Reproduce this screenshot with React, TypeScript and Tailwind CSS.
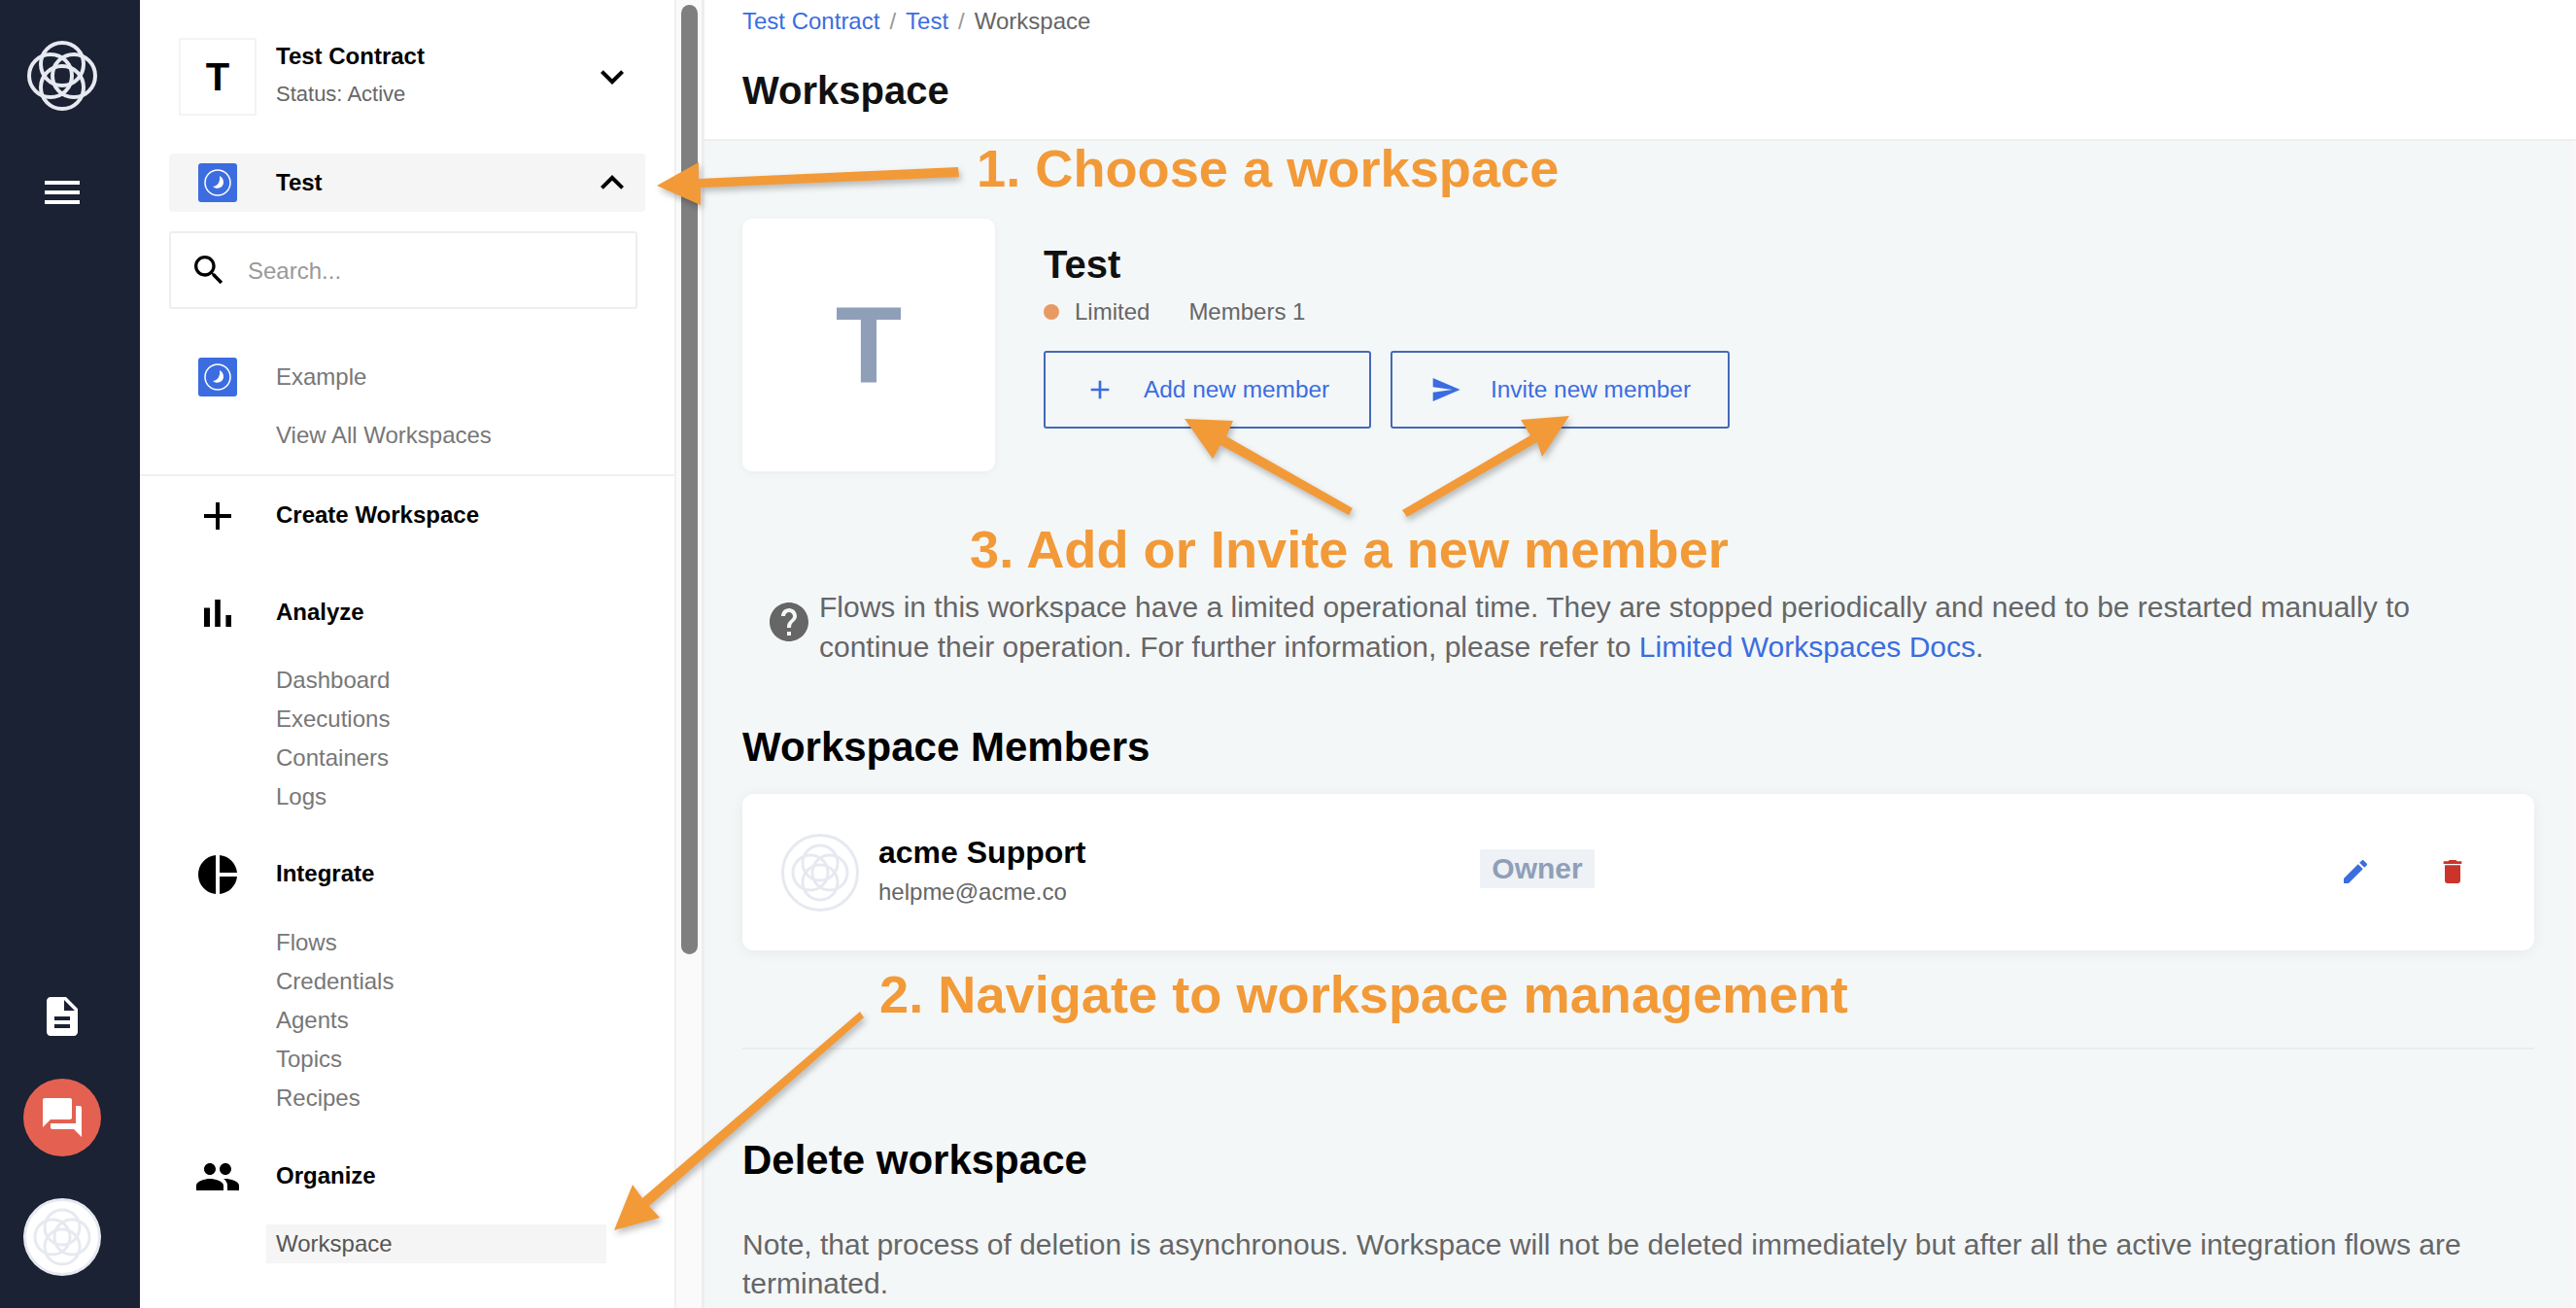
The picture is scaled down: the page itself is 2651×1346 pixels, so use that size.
import React from 'react';

const paths = {
  menu: 'M3 18h18v-2H3v2zm0-5h18v-2H3v2zm0-7v2h18V6H3z',
  doc: 'M14 2H6c-1.1 0-1.99.9-1.99 2L4 20c0 1.1.89 2 1.99 2H18c1.1 0 2-.9 2-2V8l-6-6zm2 16H8v-2h8v2zm0-4H8v-2h8v2zm-3-5V3.5L18.5 9H13z',
  forum: 'M21 6h-2v9H6v2c0 .55.45 1 1 1h11l4 4V7c0-.55-.45-1-1-1zm-4 6V3c0-.55-.45-1-1-1H3c-.55 0-1 .45-1 1v14l4-4h10c.55 0 1-.45 1-1z',
  down: 'M7.41 8.59 12 13.17l4.59-4.58L18 10l-6 6-6-6 1.41-1.41z',
  up: 'M7.41 15.41 12 10.83l4.59 4.58L18 14l-6-6-6 6z',
  search: 'M15.5 14h-.79l-.28-.27C15.41 12.59 16 11.11 16 9.5 16 5.91 13.09 3 9.5 3S3 5.91 3 9.5 5.91 16 9.5 16c1.61 0 3.09-.59 4.23-1.57l.27.28v.79l5 4.99L20.49 19l-4.99-5zm-6 0C7.01 14 5 11.99 5 9.5S7.01 5 9.5 5 14 7.01 14 9.5 11.99 14 9.5 14z',
  add: 'M19 13h-6v6h-2v-6H5v-2h6V5h2v6h6v2z',
  bars: 'M5 9.2h3V19H5zM10.6 5h2.8v14h-2.8zm5.6 8H19v6h-2.8z',
  pie: 'M11 2v20c-5.07-.5-9-4.79-9-10s3.93-9.5 9-10zm2.03 0v8.99H22c-.47-4.74-4.24-8.52-8.97-8.99zm0 11.01V22c4.74-.47 8.5-4.25 8.97-8.99h-8.97z',
  people: 'M16 11c1.66 0 2.99-1.34 2.99-3S17.66 5 16 5c-1.66 0-3 1.34-3 3s1.34 3 3 3zm-8 0c1.66 0 2.99-1.34 2.99-3S9.66 5 8 5C6.34 5 5 6.34 5 8s1.34 3 3 3zm0 2c-2.33 0-7 1.17-7 3.5V19h14v-2.5c0-2.33-4.67-3.5-7-3.5zm8 0c-.29 0-.62.02-.97.05 1.16.84 1.97 1.97 1.97 3.45V19h6v-2.5c0-2.33-4.67-3.5-7-3.5z',
  send: 'M2.01 21 23 12 2.01 3 2 10l15 2-15 2z',
  help: 'M12 2C6.48 2 2 6.48 2 12s4.48 10 10 10 10-4.48 10-10S17.52 2 12 2zm1 17h-2v-2h2v2zm2.07-7.75-.9.92C13.45 12.9 13 13.5 13 15h-2v-.5c0-1.1.45-2.1 1.17-2.83l1.24-1.26c.37-.36.59-.86.59-1.41 0-1.1-.9-2-2-2s-2 .9-2 2H8c0-2.21 1.79-4 4-4s4 1.79 4 4c0 .88-.36 1.68-.93 2.25z',
  edit: 'M3 17.25V21h3.75L17.81 9.94l-3.75-3.75L3 17.25zM20.71 7.04c.39-.39.39-1.02 0-1.41l-2.34-2.34c-.39-.39-1.02-.39-1.41 0l-1.83 1.83 3.75 3.75 1.83-1.83z',
  trash: 'M6 19c0 1.1.9 2 2 2h8c1.1 0 2-.9 2-2V7H6v12zM19 4h-3.5l-1-1h-5l-1 1H5v2h14V4z',
};

const Icon = ({ d, className }: { d: string; className: string }) => (
  <svg viewBox="0 0 24 24" fill="currentColor" className={className}>
    <path d={d} />
  </svg>
);

const Logo = () => (
  <svg viewBox="0 0 72 72" fill="none" stroke="#e6e9f0" strokeWidth="4" className="size-[72px]">
    <circle cx="36" cy="24" r="22" />
    <circle cx="36" cy="48" r="22" />
    <circle cx="24" cy="36" r="22" />
    <circle cx="48" cy="36" r="22" />
  </svg>
);

const Avatar = () => (
  <svg viewBox="0 0 80 80" fill="#fff" stroke="#e6e9f0" strokeWidth="3" className="size-[80px]">
    <circle cx="40" cy="40" r="38.5" />
    <g fill="none">
      <circle cx="40" cy="30" r="18" />
      <circle cx="40" cy="50" r="18" />
      <circle cx="30" cy="40" r="18" />
      <circle cx="50" cy="40" r="18" />
    </g>
  </svg>
);

const WorkspaceBadge = () => (
  <svg viewBox="0 0 40 40" className="size-[40px] shrink-0">
    <rect width="40" height="40" rx="3" fill="#3b6de0" />
    <circle cx="20" cy="20" r="13" fill="none" stroke="#fff" strokeWidth="1.5" />
    <path d="M22 13C26 15 27 20 25 23 23 26 18 27 15 24 19 24 23 20 22 13z" fill="#fff" />
  </svg>
);

const SubLinks = ({ items }: { items: string[] }) => (
  <div className="pl-[140px]">
    {items.map((item) => (
      <div key={item} className="flex h-[40px] items-center text-[24px] text-[#777]">
        {item}
      </div>
    ))}
  </div>
);

const SectionHead = ({ icon, label, className }: { icon: string; label: string; className: string }) => (
  <div className={`flex h-[48px] items-center pl-[56px] ${className}`}>
    <Icon d={icon} className="size-[48px] text-black" />
    <span className="mb-[2px] ml-[36px] text-[24px] font-bold text-black">{label}</span>
  </div>
);

const Sidebar = () => (
  <aside className="flex w-[552px] shrink-0 flex-col border-r-2 border-[#f0f0f0] bg-white">
    <div className="mt-[39px] ml-[40px] flex h-[80px] items-center pr-[40px]">
      <div className="flex size-[80px] items-center justify-center border-2 border-[#f3f3f3] text-[40px] font-bold text-black">T</div>
      <div className="mb-[3px] ml-[20px] flex-1">
        <div className="text-[24px] leading-[40px] font-bold text-black">Test Contract</div>
        <div className="-mt-[1px] text-[22px] leading-[40px] text-[#666]">Status: Active</div>
      </div>
      <Icon d={paths.down} className="size-[48px] text-black" />
    </div>

    <div className="mt-[39px] ml-[30px] flex h-[60px] w-[490px] items-center rounded-[4px] bg-[#f5f5f5] pr-[10px] pl-[30px]">
      <WorkspaceBadge />
      <span className="ml-[40px] flex-1 text-[24px] font-bold text-black">Test</span>
      <Icon d={paths.up} className="size-[48px] text-black" />
    </div>

    <div className="mt-[20px] ml-[30px] flex h-[80px] w-[482px] items-center rounded-[3px] border-2 border-[#eeeeee] pl-[19px]">
      <Icon d={paths.search} className="size-[40px] text-black" />
      <span className="mt-[2px] ml-[20px] text-[24px] text-[#999]">Search...</span>
    </div>

    <div className="mt-[50px] ml-[60px] flex h-[40px] items-center">
      <WorkspaceBadge />
      <span className="ml-[40px] text-[24px] text-[#777]">Example</span>
    </div>
    <div className="mt-[20px] flex h-[40px] items-center pl-[140px] text-[24px] text-[#777]">View All Workspaces</div>
    <div className="mt-[20px] h-[2px] bg-[#f0f0f0]" />

    <SectionHead icon={paths.add} label="Create Workspace" className="mt-[17px]" />
    <SectionHead icon={paths.bars} label="Analyze" className="mt-[52px]" />
    <div className="mt-[25px]">
      <SubLinks items={['Dashboard', 'Executions', 'Containers', 'Logs']} />
    </div>
    <SectionHead icon={paths.pie} label="Integrate" className="mt-[36px]" />
    <div className="mt-[26px]">
      <SubLinks items={['Flows', 'Credentials', 'Agents', 'Topics', 'Recipes']} />
    </div>
    <SectionHead icon={paths.people} label="Organize" className="mt-[37px]" />
    <div className="mt-[25px] ml-[130px] flex h-[40px] w-[350px] items-center bg-[#f5f5f5] pl-[10px] text-[24px] text-[#555]">Workspace</div>
  </aside>
);

const Annotations = () => (
  <>
    <svg viewBox="0 0 2651 1346" className="pointer-events-none absolute inset-0 size-full">
      <g fill="#f29a38" className="drop-shadow-[2px_4px_3px_rgba(0,0,0,0.25)]">
        <polygon points="986,172 987,182 721,193 721,211 676,191 719,167 719,184" />
        <polygon points="1392,523 1388,530 1256,458 1248,472 1219,431 1269,433 1262,449" />
        <polygon points="1443,525 1448,532 1582,455 1587,470 1615,428 1565,432 1575,448" />
        <polygon points="885,1041 889,1047 668,1241 679,1253 632,1266 651,1219 661,1233" />
      </g>
    </svg>
    <span className="absolute top-[141px] left-[1005px] text-[54.2px] leading-[64px] font-bold whitespace-nowrap text-[#f29a38]">1. Choose a workspace</span>
    <span className="absolute top-[533px] left-[998px] text-[54.2px] leading-[64px] font-bold whitespace-nowrap text-[#f29a38]">3. Add or Invite a new member</span>
    <span className="absolute top-[991px] left-[905px] text-[54.2px] leading-[64px] font-bold whitespace-nowrap text-[#f29a38]">2. Navigate to workspace management</span>
  </>
);

const Main = () => (
  <main className="flex min-w-0 flex-1 flex-col border-l-[3px] border-[#eeeeee] bg-[#f4f7f8]">
    <header className="h-[145px] shrink-0 border-b-2 border-[#eeeeee] bg-white pl-[39px]">
      <div className="flex h-[44px] items-center gap-[10px] text-[24px] text-[#666]">
        <span className="text-[#3b6de0]">Test Contract</span>
        <span className="text-[#999]">/</span>
        <span className="text-[#3b6de0]">Test</span>
        <span className="text-[#999]">/</span>
        <span>Workspace</span>
      </div>
      <h1 className="mt-[21px] text-[40px] leading-[56px] font-bold text-[#111]">Workspace</h1>
    </header>

    <div className="flex-1 overflow-hidden border-r-4 border-[#f8f8f8] pr-[39px] pl-[39px]">
      <div className="mt-[80px] flex gap-[50px]">
        <div className="flex size-[260px] items-center justify-center rounded-[10px] bg-white text-[112px] font-bold text-[#8f9fb8] shadow-[0_2px_8px_rgba(0,0,0,0.04)]">T</div>
        <div>
          <h2 className="mt-[23px] text-[40px] leading-[48px] font-bold text-[#111]">Test</h2>
          <div className="mt-[9px] flex h-[32px] items-center text-[24px] text-[#666]">
            <span className="size-[16px] rounded-full bg-[#e99a62]" />
            <span className="ml-[16px]">Limited</span>
            <span className="ml-[40px]">Members 1</span>
          </div>
          <div className="mt-[24px] flex gap-[20px]">
            <button className="flex h-[80px] w-[337px] items-center rounded-[3px] border-2 border-[#4469b8] pl-[40px] text-[24.4px] text-[#3b6de0]">
              <Icon d={paths.add} className="size-[32px]" />
              <span className="ml-[29px]">Add new member</span>
            </button>
            <button className="flex h-[80px] w-[349px] items-center rounded-[3px] border-2 border-[#4469b8] pl-[39px] text-[24.4px] text-[#3b6de0]">
              <Icon d={paths.send} className="size-[32px]" />
              <span className="ml-[30px]">Invite new member</span>
            </button>
          </div>
        </div>
      </div>

      <div className="mt-[119px] ml-[24px] flex items-start">
        <Icon d={paths.help} className="mt-[12px] size-[48px] shrink-0 text-[#666]" />
        <p className="ml-[7px] w-[1700px] text-[30px] leading-[41px] text-[#666]">
          Flows in this workspace have a limited operational time. They are stopped periodically and need to be restarted manually to continue their operation. For further information, please refer to <span className="text-[#3b6de0]">Limited Workspaces Docs</span>.
        </p>
      </div>

      <h2 className="mt-[55px] text-[42px] leading-[56px] font-bold text-black">Workspace Members</h2>

      <div className="mt-[20px] flex h-[161px] items-center rounded-[12px] bg-white pr-[68px] pl-[40px] shadow-[0_2px_14px_rgba(0,0,0,0.06)]">
        <Avatar />
        <div className="ml-[20px] w-[619px]">
          <div className="text-[32px] leading-[40px] font-bold text-black">acme Support</div>
          <div className="mt-[1px] text-[24px] leading-[40px] text-[#666]">helpme@acme.co</div>
        </div>
        <div className="mb-[8px] flex h-[40px] w-[118px] items-center justify-center rounded-[2px] bg-[#eef1f5] text-[30px] font-bold text-[#8f9fb8]">Owner</div>
        <div className="mb-[2px] ml-auto flex items-center gap-[68px]">
          <Icon d={paths.edit} className="size-[32px] text-[#3b6de0]" />
          <Icon d={paths.trash} className="size-[32px] text-[#cc342b]" />
        </div>
      </div>

      <div className="mt-[100px] h-[2px] bg-[#e9edf0]" />

      <h2 className="mt-[86px] text-[42px] leading-[56px] font-bold text-black">Delete workspace</h2>
      <p className="mt-[39px] text-[30px] leading-[40px] text-[#666]">
        Note, that process of deletion is asynchronous. Workspace will not be deleted immediately but after all the active integration flows are terminated.
      </p>
    </div>
  </main>
);

export default function App() {
  return (
    <div className="relative flex h-screen overflow-hidden bg-white font-['Liberation_Sans',sans-serif]">
      <nav className="flex w-[144px] shrink-0 flex-col items-center bg-[#1a2233] pr-[16px] text-white">
        <div className="mt-[42px]">
          <Logo />
        </div>
        <Icon d={paths.menu} className="mt-[60px] size-[48px]" />
        <Icon d={paths.doc} className="mt-auto size-[48px]" />
        <div className="mt-[40px] flex size-[80px] items-center justify-center rounded-full bg-[#e46152]">
          <Icon d={paths.forum} className="size-[48px]" />
        </div>
        <div className="mt-[43px] mb-[33px]">
          <Avatar />
        </div>
      </nav>

      <Sidebar />

      <div className="w-[26px] shrink-0 bg-[#fafafa] pt-[5px] pl-[5px]">
        <div className="h-[977px] w-[17px] rounded-full bg-[#7f7f7f]" />
      </div>

      <Main />
      <Annotations />
    </div>
  );
}
